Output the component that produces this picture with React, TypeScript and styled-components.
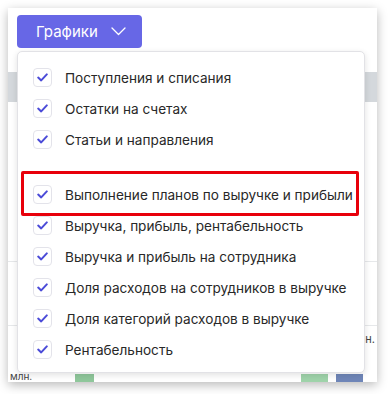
import React from 'react';
import styled, { createGlobalStyle } from 'styled-components';

const GlobalStyle = createGlobalStyle`
  body {
    margin: 0;
    background: #ffffff;
    font-family: Inter, "Noto Sans", sans-serif;
  }
`;

const Page = styled.div`
  width: 389px;
  height: 394px;
  padding: 8px 12px 12px 8px;
  box-sizing: border-box;
  overflow: hidden;
`;

const Card = styled.div`
  position: relative;
  height: 374px;
  background: #ffffff;
  box-shadow: 0 3px 10px rgba(0, 0, 0, 0.28);
  display: flex;
  flex-direction: column;
`;

const Toolbar = styled.div`
  padding: 7px 9px 0;
  height: 40px;
`;

const Button = styled.button`
  width: 125px;
  height: 33px;
  border: none;
  border-radius: 4px;
  background: #6767e6;
  color: #ffffff;
  font-family: Inter, "Noto Sans", sans-serif;
  font-size: 15px;
  display: flex;
  align-items: center;
  gap: 13px;
  padding: 0 0 0 19px;
`;

const Band = styled.div`
  margin-top: 17px;
  height: 30px;
  background: #d4d8dc;
`;

const Rule = styled.div<{ $top: number }>`
  margin-top: ${(p) => p.$top}px;
  height: 1px;
  background: #e6e8ea;
`;

const Unit = styled.div`
  align-self: flex-end;
  font-size: 11px;
  color: #444;
  margin: 6px 0 0;
  padding-right: 2px;
`;

const Footer = styled.div`
  margin-top: auto;
  display: flex;
  align-items: flex-end;
  height: 12px;
  font-size: 10px;
  line-height: 12px;
  color: #444;
`;

const Bar = styled.div<{ $left: number; $width: number; $color: string }>`
  margin-left: ${(p) => p.$left}px;
  width: ${(p) => p.$width}px;
  height: 8px;
  background: ${(p) => p.$color};
`;

const Menu = styled.div`
  position: absolute;
  left: 9px;
  top: 43px;
  width: 348px;
  height: 322px;
  box-sizing: border-box;
  background: #ffffff;
  border: 1px solid #e2e2e6;
  border-radius: 5px;
  box-shadow: 0 2px 6px rgba(0, 0, 0, 0.12);
  padding: 10px 0 0 15px;
`;

const Item = styled.div<{ $spaced?: boolean }>`
  display: flex;
  align-items: center;
  height: 31px;
  gap: 13px;
  margin-top: ${(p) => (p.$spaced ? 24 : 0)}px;
  font-size: 13.6px;
  color: #282828;
  white-space: nowrap;
  position: relative;
`;

const Box = styled.span`
  width: 19px;
  height: 19px;
  box-sizing: border-box;
  border: 1px solid #e3e3ea;
  border-radius: 4px;
  display: flex;
  align-items: center;
  justify-content: center;
  flex-shrink: 0;
`;

const Highlight = styled.div`
  position: absolute;
  left: -12px;
  right: 5px;
  top: -8px;
  bottom: -6px;
  border: 3px solid #e8000b;
  border-radius: 2px;
  pointer-events: none;
`;

const items = [
  'Поступления и списания',
  'Остатки на счетах',
  'Статьи и направления',
  'Выполнение планов по выручке и прибыли',
  'Выручка, прибыль, рентабельность',
  'Выручка и прибыль на сотрудника',
  'Доля расходов на сотрудников в выручке',
  'Доля категорий расходов в выручке',
  'Рентабельность',
];

const Check = () => (
  <svg width="11" height="9" viewBox="0 0 11 9" fill="none">
    <path d="M1.2 4.6 L4.2 7.4 L9.8 1.4" stroke="#4b4bd8" strokeWidth="2" strokeLinecap="round" strokeLinejoin="round" />
  </svg>
);

const Chevron = () => (
  <svg width="15" height="9" viewBox="0 0 15 9" fill="none">
    <path d="M1 1 L7.5 7.5 L14 1" stroke="#ffffff" strokeWidth="1.3" strokeLinecap="round" strokeLinejoin="round" />
  </svg>
);

export default function App() {
  return (
    <Page>
      <GlobalStyle />
      <Card>
        <Toolbar>
          <Button>
            Графики
            <Chevron />
          </Button>
        </Toolbar>
        <Band />
        <Rule $top={159} />
        <Rule $top={63} />
        <Unit>н.</Unit>
        <Footer>
          <span style={{ marginLeft: 2 }}>млн.</span>
          <Bar $left={43} $width={19} $color="#8fc79b" />
          <Bar $left={207} $width={27} $color="#9fd3aa" />
          <Bar $left={8} $width={27} $color="#6f86b8" />
        </Footer>
        <Menu>
          {items.map((label, i) => (
            <Item key={label} $spaced={i === 3}>
              <Box>
                <Check />
              </Box>
              {label}
              {i === 3 && <Highlight />}
            </Item>
          ))}
        </Menu>
      </Card>
    </Page>
  );
}
